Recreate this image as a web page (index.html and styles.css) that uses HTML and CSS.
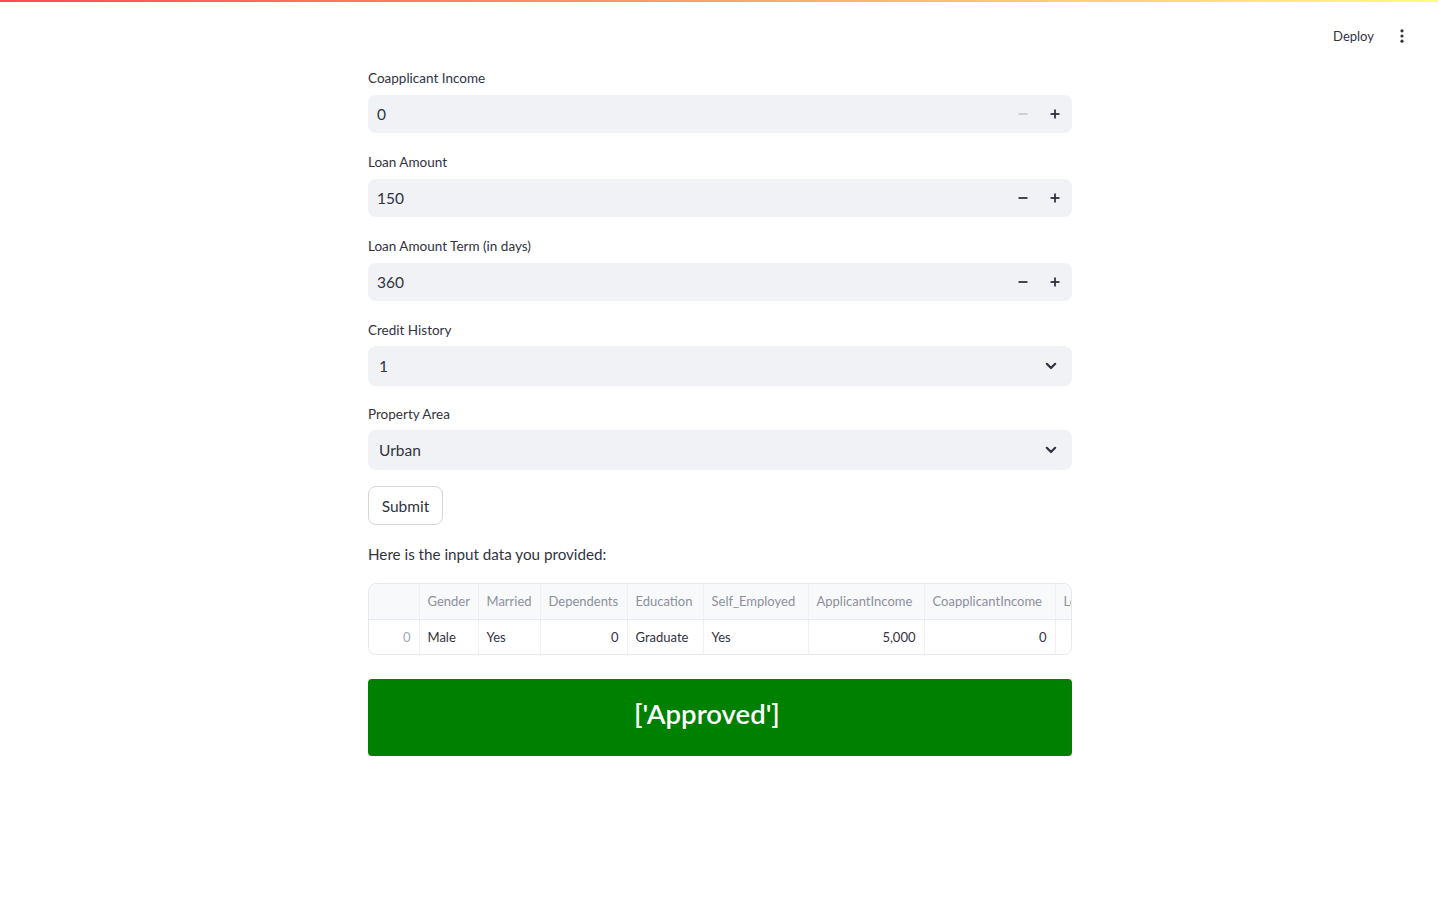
FILE: index.html
```html
<!DOCTYPE html>
<html lang="en">
<head>
<meta charset="utf-8">
<title>Loan Prediction</title>
<link rel="stylesheet" href="styles.css">
</head>
<body>
<div class="topbar"></div>
<header class="header">
  <span class="deploy">Deploy</span>
  <span class="menu"><svg width="16" height="16" viewBox="0 0 16 16"><circle cx="8" cy="2.8" r="1.6" fill="#31333f"/><circle cx="8" cy="8" r="1.6" fill="#31333f"/><circle cx="8" cy="13.2" r="1.6" fill="#31333f"/></svg></span>
</header>
<main class="main">
  <div class="widget num-widget">
    <label class="label">Coapplicant Income</label>
    <div class="numinput">
      <span class="value">0</span>
      <span class="step disabled"><svg width="12" height="12" viewBox="0 0 12 12"><rect x="1.5" y="5.1" width="9" height="1.8" fill="currentColor"/></svg></span>
      <span class="step"><svg width="12" height="12" viewBox="0 0 12 12"><rect x="1.5" y="5.1" width="9" height="1.8" fill="currentColor"/><rect x="5.1" y="1.5" width="1.8" height="9" fill="currentColor"/></svg></span>
    </div>
  </div>
  <div class="widget num-widget">
    <label class="label">Loan Amount</label>
    <div class="numinput">
      <span class="value">150</span>
      <span class="step"><svg width="12" height="12" viewBox="0 0 12 12"><rect x="1.5" y="5.1" width="9" height="1.8" fill="currentColor"/></svg></span>
      <span class="step"><svg width="12" height="12" viewBox="0 0 12 12"><rect x="1.5" y="5.1" width="9" height="1.8" fill="currentColor"/><rect x="5.1" y="1.5" width="1.8" height="9" fill="currentColor"/></svg></span>
    </div>
  </div>
  <div class="widget num-widget">
    <label class="label">Loan Amount Term (in days)</label>
    <div class="numinput">
      <span class="value">360</span>
      <span class="step"><svg width="12" height="12" viewBox="0 0 12 12"><rect x="1.5" y="5.1" width="9" height="1.8" fill="currentColor"/></svg></span>
      <span class="step"><svg width="12" height="12" viewBox="0 0 12 12"><rect x="1.5" y="5.1" width="9" height="1.8" fill="currentColor"/><rect x="5.1" y="1.5" width="1.8" height="9" fill="currentColor"/></svg></span>
    </div>
  </div>
  <div class="widget sel-widget">
    <label class="label">Credit History</label>
    <div class="select">
      <span class="value">1</span>
      <svg class="chev" width="16" height="16" viewBox="0 0 16 16"><path d="M3.8 5.8 L8 10 L12.2 5.8" fill="none" stroke="currentColor" stroke-width="2.2" stroke-linecap="round" stroke-linejoin="round"/></svg>
    </div>
  </div>
  <div class="widget sel-widget last">
    <label class="label">Property Area</label>
    <div class="select">
      <span class="value">Urban</span>
      <svg class="chev" width="16" height="16" viewBox="0 0 16 16"><path d="M3.8 5.8 L8 10 L12.2 5.8" fill="none" stroke="currentColor" stroke-width="2.2" stroke-linecap="round" stroke-linejoin="round"/></svg>
    </div>
  </div>
  <div class="btnrow"><button class="btn">Submit</button></div>
  <p class="text">Here is the input data you provided:</p>
  <div class="tablewrap">
    <table class="df">
      <colgroup>
        <col style="width:50px">
        <col style="width:59px">
        <col style="width:62px">
        <col style="width:87px">
        <col style="width:76px">
        <col style="width:105px">
        <col style="width:116px">
        <col style="width:131px">
        <col style="width:110px">
        <col style="width:140px">
      </colgroup>
      <thead>
        <tr>
          <th class="idx"></th>
          <th>Gender</th>
          <th>Married</th>
          <th>Dependents</th>
          <th>Education</th>
          <th>Self_Employed</th>
          <th>ApplicantIncome</th>
          <th>CoapplicantIncome</th>
          <th>LoanAmount</th>
          <th>Loan_Amount_Term</th>
        </tr>
      </thead>
      <tbody>
        <tr>
          <td class="idx num">0</td>
          <td>Male</td>
          <td>Yes</td>
          <td class="num">0</td>
          <td>Graduate</td>
          <td>Yes</td>
          <td class="num">5,000</td>
          <td class="num">0</td>
          <td class="num">150</td>
          <td class="num">360</td>
        </tr>
      </tbody>
    </table>
  </div>
  <div class="result">['Approved']</div>
</main>
</body>
</html>
```

FILE: styles.css
```css
* { box-sizing: border-box; }
html, body { margin: 0; padding: 0; }
body {
  font-family: "Source Sans Pro", Lato, "Noto Sans", sans-serif;
  color: #31333f;
  background: #ffffff;
  width: 1438px;
  height: 901px;
  overflow: hidden;
}
.topbar {
  height: 2px;
  background: linear-gradient(90deg, #ff4b4b 0%, #fffd80 100%);
}
.header {
  display: flex;
  justify-content: flex-end;
  align-items: center;
  height: 67px;
  margin-top: -2px;
  padding-right: 28px;
  padding-top: 4px;
  gap: 20px;
}
.deploy {
  font-size: 13px;
  color: #31333f;
}
.menu { display: flex; align-items: center; width: 16px; height: 16px; }
.main {
  width: 704px;
  margin-left: 368px;
  display: flex;
  flex-direction: column;
}
.widget { display: flex; flex-direction: column; }
.label {
  font-size: 13.5px;
  line-height: 23px;
  height: 23px;
  color: #31333f;
}
.num-widget { margin-bottom: 18px; }
.num-widget .label { margin-bottom: 5px; }
.sel-widget { margin-bottom: 17px; }
.sel-widget.last { margin-bottom: 16px; }
.sel-widget .label { margin-bottom: 4px; }
.numinput {
  display: flex;
  align-items: center;
  height: 38px;
  background: #f0f2f6;
  border-radius: 8px;
  padding-left: 9px;
  padding-right: 1px;
}
.numinput .value { flex: 1; font-size: 15.5px; }
.step {
  width: 32px;
  height: 38px;
  display: flex;
  align-items: center;
  justify-content: center;
  color: #31333f;
}
.step.disabled { color: #c9cbd3; }
.select {
  display: flex;
  align-items: center;
  height: 40px;
  background: #f0f2f6;
  border-radius: 8px;
  padding-left: 11px;
  padding-right: 13px;
}
.select .value { flex: 1; font-size: 15.5px; }
.chev { color: #31333f; }
.btn {
  font-family: inherit;
  font-size: 15.5px;
  color: #31333f;
  background: #ffffff;
  border: 1px solid #d6d6d9;
  border-radius: 8px;
  height: 39px;
  width: 75px;
  padding: 0;
  display: block;
}
.text {
  font-size: 15.2px;
  line-height: 24px;
  margin: 17px 0 17px;
}
.tablewrap {
  border: 1px solid #e6e9ef;
  border-radius: 8px;
  overflow: hidden;
  width: 704px;
}
.df {
  border-collapse: collapse;
  table-layout: fixed;
  width: 936px;
  font-size: 13px;
  white-space: nowrap;
}
.df th, .df td {
  border-right: 1px solid #eef0f4;
  padding: 0 8px;
  text-align: left;
  overflow: hidden;
}
.df th {
  height: 35px;
  background: #f8f9fb;
  color: #8d909c;
  font-weight: 400;
  border-bottom: 1px solid #e6e9ef;
}
.df td { height: 35px; color: #31333f; }
.df .num { text-align: right; }
.df td.idx { background: #ffffff; color: #a3a8b4; }
.result {
  margin-top: 24px;
  height: 77px;
  background: #008000;
  border-radius: 4px;
  color: #ffffff;
  font-size: 27.5px;
  font-weight: 600;
  display: flex;
  align-items: center;
  justify-content: center;
  padding-right: 26px;
  padding-bottom: 8px;
}
```
